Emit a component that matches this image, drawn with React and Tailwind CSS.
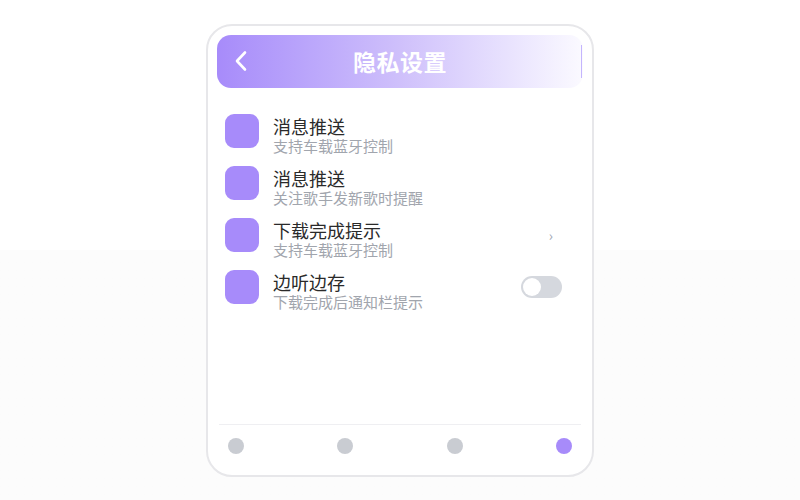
import React from 'react';

const items = [
  { title: '消息推送', desc: '支持车载蓝牙控制', right: null },
  { title: '消息推送', desc: '关注歌手发新歌时提醒', right: null },
  { title: '下载完成提示', desc: '支持车载蓝牙控制', right: 'chevron' },
  { title: '边听边存', desc: '下载完成后通知栏提示', right: 'toggle' },
];

const font = { fontFamily: '"Noto Sans CJK SC", "Noto Sans", sans-serif' };

const App = () => {
  return (
    <div
      className="w-[800px] h-[500px] bg-linear-to-b from-white from-50% to-[#fcfcfc] to-50% flex justify-center pt-[24px]"
      style={font}
    >
      <div className="w-[388px] h-[453px] bg-white border-2 border-[#e7e7ea] rounded-[26px] p-[9px] flex flex-col">
        <div className="relative h-[53px] rounded-[14px] bg-linear-to-r from-[#a78bfa] via-[#cfc0fb] to-[#fbfaff] flex items-center justify-center">
          <svg className="absolute left-[17px] top-[15px]" width="14" height="22" viewBox="0 0 14 22" fill="none">
            <path d="M11 2.5 L3 11 L11 19.5" stroke="white" strokeWidth="2.6" strokeLinecap="round" strokeLinejoin="round" />
          </svg>
          <h1 className="text-[23px] font-bold text-white tracking-[0.5px]">隐私设置</h1>
          <div className="absolute right-[1px] top-[10px] w-px h-[33px] bg-[#c4b5fd]" />
        </div>

        <div className="flex-1 pt-[17px] px-[8px]">
          {items.map((item, i) => (
            <div key={i} className="h-[52px] flex items-center">
              <div className="w-[34px] h-[34px] rounded-[9px] bg-[#a78bfa] shrink-0" />
              <div className="ml-[14px] mt-2 flex-1">
                <p className="text-[18px] leading-[22px] text-[#2a2a2a]">{item.title}</p>
                <p className="text-[15px] leading-[18px] text-[#a1a5ad]">{item.desc}</p>
              </div>
              {item.right === 'chevron' && (
                <span className="mr-[22px] text-[14px] text-[#9ca3af]">›</span>
              )}
              {item.right === 'toggle' && (
                <div className="mr-[13px] w-[41px] h-[22px] rounded-full bg-[#d5d8de] p-[2px] flex items-center">
                  <div className="w-[18px] h-[18px] rounded-full bg-white" />
                </div>
              )}
            </div>
          ))}
        </div>

        <div className="border-t border-[#efeff2] mx-[2px] pt-[13px] pb-[12px] px-[9px] flex justify-between">
          <div className="w-[16px] h-[16px] rounded-full bg-[#c9ccd2]" />
          <div className="w-[16px] h-[16px] rounded-full bg-[#c9ccd2]" />
          <div className="w-[16px] h-[16px] rounded-full bg-[#c9ccd2]" />
          <div className="w-[16px] h-[16px] rounded-full bg-[#a78bfa]" />
        </div>
      </div>
    </div>
  );
};

export default App;
